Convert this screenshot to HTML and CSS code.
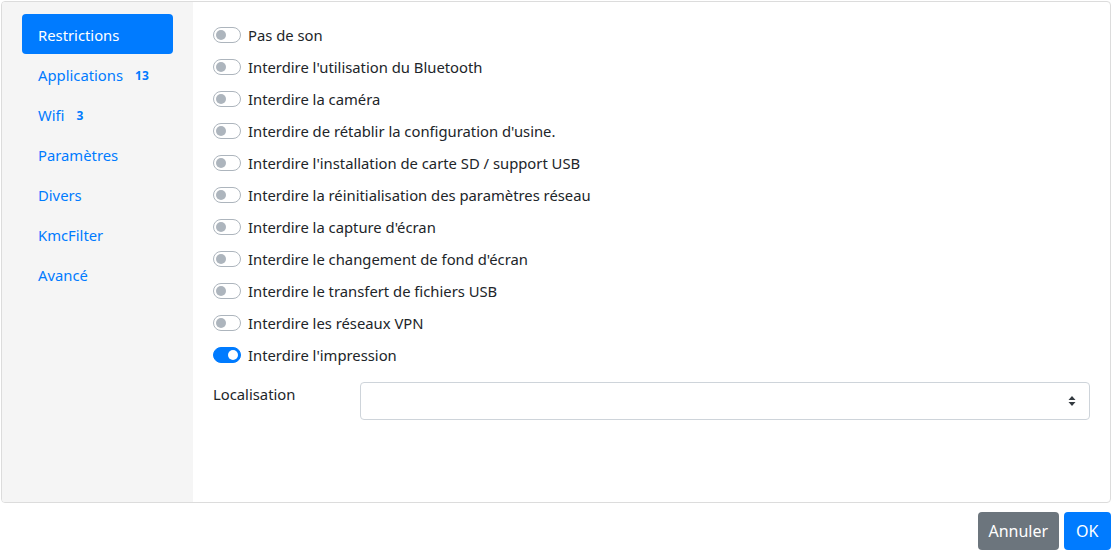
FILE: index.html
```html
<!DOCTYPE html>
<html lang="fr">
<head>
    <meta charset="UTF-8">
    <title>Restrictions</title>
    <link rel="stylesheet" href="styles.css">
</head>
<body>
    <div class="dialog">
        <div class="panel">
            <div class="sidebar">
                <a class="nav-link active">Restrictions</a>
                <a class="nav-link">Applications <span class="badge">13</span></a>
                <a class="nav-link">Wifi <span class="badge">3</span></a>
                <a class="nav-link">Paramètres</a>
                <a class="nav-link">Divers</a>
                <a class="nav-link">KmcFilter</a>
                <a class="nav-link">Avancé</a>
            </div>
            <div class="content">
                <label class="switch-row"><span class="switch"></span>Pas de son</label>
                <label class="switch-row"><span class="switch"></span>Interdire l'utilisation du Bluetooth</label>
                <label class="switch-row"><span class="switch"></span>Interdire la caméra</label>
                <label class="switch-row"><span class="switch"></span>Interdire de rétablir la configuration d'usine.</label>
                <label class="switch-row"><span class="switch"></span>Interdire l'installation de carte SD / support USB</label>
                <label class="switch-row"><span class="switch"></span>Interdire la réinitialisation des paramètres réseau</label>
                <label class="switch-row"><span class="switch"></span>Interdire la capture d'écran</label>
                <label class="switch-row"><span class="switch"></span>Interdire le changement de fond d'écran</label>
                <label class="switch-row"><span class="switch"></span>Interdire le transfert de fichiers USB</label>
                <label class="switch-row"><span class="switch"></span>Interdire les réseaux VPN</label>
                <label class="switch-row"><span class="switch on"></span>Interdire l'impression</label>

                <div class="form-row">
                    <label class="form-label">Localisation</label>
                    <div class="select">
                        <svg width="8" height="12" viewBox="0 0 8 12"><path d="M4 1 L7.5 5 H0.5 Z M4 11 L7.5 7 H0.5 Z" fill="#343a40"/></svg>
                    </div>
                </div>
            </div>
        </div>
        <div class="footer">
            <button class="btn btn-secondary">Annuler</button>
            <button class="btn btn-primary">OK</button>
        </div>
    </div>
</body>
</html>
```

FILE: styles.css
```css
body { margin: 0; font-family: "Noto Sans", "Open Sans", sans-serif; font-size: 14.8px; color: #212529; background: #fff; }
.dialog { width: 1110px; padding: 1px 0 0 1px; }
.panel { display: flex; height: 500px; border: 1px solid #dcdcdc; border-radius: 4px; overflow: hidden; }
.sidebar { width: 151px; background: #f5f5f5; padding: 12px 20px 0 20px; display: flex; flex-direction: column; flex-shrink: 0; }
.nav-link { display: flex; align-items: center; height: 40px; padding: 1px 16px 0 16px; box-sizing: border-box; border-radius: 4px; color: #007bff; }
.nav-link.active { background: #007bff; color: #fff; }
.badge { font-size: 12px; font-weight: 700; margin-left: 12px; padding-top: 2px; }
.content { flex: 1; padding: 17px 20px 0 20px; }
.switch-row { display: flex; align-items: center; height: 32px; }
.switch { position: relative; width: 26px; height: 14px; border: 1px solid #adb5bd; border-radius: 8px; background: #fff; margin-right: 7px; box-sizing: content-box; }
.switch::after { content: ""; position: absolute; left: 2px; top: 2px; width: 10px; height: 10px; border-radius: 50%; background: #adb5bd; }
.switch.on { background: #007bff; border-color: #007bff; }
.switch.on::after { left: 14px; background: #fff; }
.form-row { display: flex; align-items: flex-start; margin-top: 11px; }
.form-label { width: 147px; padding-top: 2px; }
.select { flex: 1; height: 36px; border: 1px solid #ced4da; border-radius: 4px; display: flex; align-items: center; justify-content: flex-end; padding-right: 13px; }
.footer { display: flex; justify-content: flex-end; gap: 5px; margin-top: 9px; }
.btn { font-family: inherit; font-size: 16px; height: 38px; border: none; border-radius: 4px; color: #fff; }
.btn-secondary { background: #6c757d; padding: 0 10.5px; }
.btn-primary { background: #007bff; padding: 0 12.5px; }
```
